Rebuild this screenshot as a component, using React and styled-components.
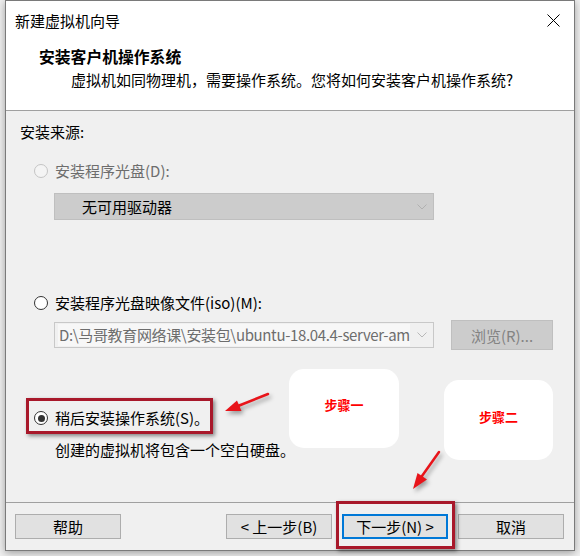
import { createGlobalStyle, styled } from 'styled-components';

const GlobalStyle = createGlobalStyle`
  html, body {
    margin: 0;
    padding: 0;
    background: #f0f0f0;
  }
  body {
    font-family: "Noto Sans CJK SC", "Noto Sans", sans-serif;
    font-size: 15px;
    color: #000;
  }
`;

const Page = styled.div`
  position: relative;
  width: 580px;
  height: 556px;
  overflow: hidden;
  background: #f0f0f0;
`;

const Window = styled.div`
  box-sizing: border-box;
  margin-left: 5px;
  width: 570px;
  height: 551px;
  border: 1px solid #7a7a7a;
  background: #f0f0f0;
  box-shadow: 0 2px 8px rgba(0, 0, 0, 0.35);
  display: flex;
  flex-direction: column;
`;

const TitleBar = styled.div`
  height: 39px;
  background: #fff;
  display: flex;
  align-items: center;
  justify-content: space-between;
  padding: 0 14px 0 9px;
  line-height: 22px;
`;

const Header = styled.div`
  box-sizing: border-box;
  height: 71px;
  background: #fff;
  border-bottom: 1px solid #a0a0a0;
  padding: 6px 0 0 33px;
`;

const HeaderTitle = styled.div`
  font-weight: 700;
  font-size: 15.8px;
  line-height: 22px;
`;

const HeaderSub = styled.div`
  margin-top: 1px;
  padding-left: 32px;
  line-height: 22px;
`;

const Body = styled.div`
  box-sizing: border-box;
  height: 391px;
  padding: 10px 0 0 14px;
`;

const SectionLabel = styled.div`
  line-height: 22px;
`;

const OptionRow = styled.div`
  display: flex;
  align-items: center;
  gap: 7px;
  margin: ${p => p.$top}px 0 0 14px;
  line-height: 22px;
  color: ${p => (p.$disabled ? '#6d6d6d' : '#000')};
`;

const Radio = styled.span`
  box-sizing: border-box;
  width: 14px;
  height: 14px;
  flex-shrink: 0;
  border-radius: 50%;
  border: 1.5px solid ${p => (p.$disabled ? '#c4c4c4' : '#333')};
  background: ${p => (p.$disabled ? '#f4f4f4' : '#fff')};
  display: inline-flex;
  align-items: center;
  justify-content: center;

  &::after {
    content: '';
    width: 7px;
    height: 7px;
    border-radius: 50%;
    background: #333;
    display: ${p => (p.$checked ? 'block' : 'none')};
  }
`;

const Select = styled.div`
  box-sizing: border-box;
  margin: 11px 0 0 34px;
  width: 380px;
  height: 27px;
  background: #cccccc;
  border: 1px solid #bfbfbf;
  display: flex;
  align-items: center;
  justify-content: space-between;
  padding: 0 6px 0 27px;
`;

const FieldRow = styled.div`
  display: flex;
  align-items: center;
  margin: 6px 0 0 34px;
  height: 30px;
`;

const PathInput = styled.div`
  box-sizing: border-box;
  width: 380px;
  height: 26px;
  background: #f0f0f0;
  border: 1px solid #c8c8c8;
  display: flex;
  align-items: center;
  justify-content: space-between;
  padding: 0 6px 0 3px;
`;

const PathText = styled.span`
  white-space: nowrap;
  background: #f7f7f7;
  color: #6d6d6d;
  line-height: 22px;
  letter-spacing: -0.35px;
  padding-left: 1px;
`;

const Browse = styled.div`
  box-sizing: border-box;
  margin-left: 17px;
  width: 102px;
  height: 30px;
  background: #cccccc;
  border: 1px solid #bfbfbf;
  color: #838383;
  display: flex;
  align-items: center;
  justify-content: center;
`;

const Desc = styled.div`
  margin-top: 10px;
  padding-left: 35px;
  line-height: 22px;
`;

const Footer = styled.div`
  flex: 1;
  border-top: 1px solid #a0a0a0;
  display: flex;
  align-items: flex-start;
  padding: 11px 10px 0 9px;
`;

const Button = styled.div`
  box-sizing: border-box;
  width: 106px;
  height: 25px;
  background: #e1e1e1;
  border: ${p => (p.$primary ? '2px solid #0078d7' : '1px solid #adadad')};
  display: flex;
  align-items: center;
  justify-content: center;
  line-height: 20px;
  margin-left: ${p => (p.$push ? 'auto' : p.$gap ? '10px' : '0')};
`;

const Highlight = styled.div`
  position: absolute;
  box-sizing: border-box;
  border: 3px solid #a8182a;
  box-shadow: 2px 2px 4px rgba(0, 0, 0, 0.45);
  pointer-events: none;
`;

const StepCard = styled.div`
  position: absolute;
  width: ${p => p.$w}px;
  height: ${p => p.$h}px;
  background: #fff;
  border-radius: 15px;
  display: flex;
  justify-content: center;
  padding-top: ${p => p.$pad}px;
  box-sizing: border-box;
  color: #ff0000;
  font-weight: 700;
  font-size: 13px;
  line-height: 18px;
`;

const Overlay = styled.svg`
  position: absolute;
  left: 0;
  top: 0;
  pointer-events: none;
  filter: drop-shadow(2px 3px 2px rgba(0, 0, 0, 0.35));
`;

function Chevron({ color }) {
  return (
    <svg width="10" height="6" viewBox="0 0 10 6">
      <path d="M0.5 0.5 L5 5 L9.5 0.5" fill="none" stroke={color} strokeWidth="1" />
    </svg>
  );
}

function CloseIcon() {
  return (
    <svg width="13" height="13" viewBox="0 0 13 13">
      <path d="M0.5 0.5 L12.5 12.5 M12.5 0.5 L0.5 12.5" stroke="#000" strokeWidth="1" />
    </svg>
  );
}

export default function App() {
  return (
    <Page>
      <GlobalStyle />
      <Window>
        <TitleBar>
          <span>新建虚拟机向导</span>
          <CloseIcon />
        </TitleBar>
        <Header>
          <HeaderTitle>安装客户机操作系统</HeaderTitle>
          <HeaderSub>虚拟机如同物理机，需要操作系统。您将如何安装客户机操作系统?</HeaderSub>
        </Header>
        <Body>
          <SectionLabel>安装来源:</SectionLabel>
          <OptionRow $top={17} $disabled>
            <Radio $disabled />
            <span>安装程序光盘(D):</span>
          </OptionRow>
          <Select>
            <span>无可用驱动器</span>
            <Chevron color="#b0b0b0" />
          </Select>
          <OptionRow $top={72}>
            <Radio />
            <span>安装程序光盘映像文件(iso)(M):</span>
          </OptionRow>
          <FieldRow>
            <PathInput>
              <PathText>D:\马哥教育网络课\安装包\ubuntu-18.04.4-server-am</PathText>
              <Chevron color="#b8b8b8" />
            </PathInput>
            <Browse>浏览(R)...</Browse>
          </FieldRow>
          <OptionRow $top={57}>
            <Radio $checked />
            <span>稍后安装操作系统(S)。</span>
          </OptionRow>
          <Desc>创建的虚拟机将包含一个空白硬盘。</Desc>
        </Body>
        <Footer>
          <Button>帮助</Button>
          <Button $push>&lt; 上一步(B)</Button>
          <Button $gap $primary>下一步(N) &gt;</Button>
          <Button $gap>取消</Button>
        </Footer>
      </Window>

      <StepCard style={{ left: 289, top: 369 }} $w={110} $h={79} $pad={27}>步骤一</StepCard>
      <StepCard style={{ left: 444, top: 380 }} $w={109} $h={80} $pad={28}>步骤二</StepCard>

      <Highlight style={{ left: 26, top: 398, width: 187, height: 36 }} />
      <Highlight style={{ left: 336, top: 501, width: 119, height: 48 }} />

      <Overlay width="580" height="556" viewBox="0 0 580 556">
        <line x1="268" y1="394" x2="238" y2="406" stroke="#e8141a" strokeWidth="2.5" strokeLinecap="round" />
        <polygon points="225,411 237,400.5 241.5,411" fill="#e8141a" />
        <line x1="439" y1="452" x2="422" y2="476" stroke="#e8141a" strokeWidth="2.5" strokeLinecap="round" />
        <polygon points="413,489 417.5,473 427,479.5" fill="#e8141a" />
      </Overlay>
    </Page>
  );
}
